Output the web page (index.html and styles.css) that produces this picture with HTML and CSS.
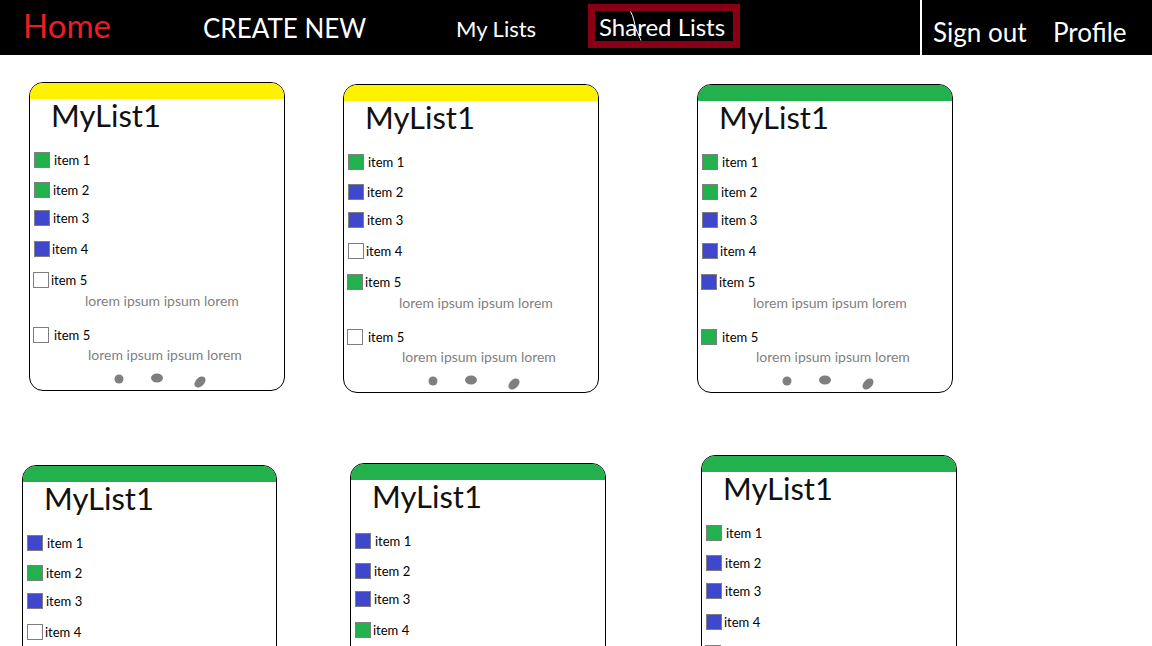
FILE: index.html
```html
<!DOCTYPE html>
<html>
<head>
<meta charset="utf-8">
<title>Lists</title>
<link rel="stylesheet" href="styles.css">
</head>
<body>
<div class="page">
  <header class="topbar">
    <a class="nav home">Home</a>
    <a class="nav create">CREATE NEW</a>
    <a class="nav mylists">My Lists</a>
    <a class="nav shared">Shared Lists<svg class="scratch" width="12" height="30" viewBox="0 0 12 30"><path d="M0.5 0.5 C4 6 4 12 6 18 C8 23 10 27 11 29.5" fill="none" stroke="#fff" stroke-width="1"/></svg></a>
    <span class="divider"></span>
    <a class="nav signout">Sign out</a>
    <a class="nav profile">Profile</a>
  </header>

  <main class="board">
    <div class="row row1">
      <section class="card c1">
        <div class="stripe yellow"></div>
        <h2 class="title">MyList1</h2>
        <div class="it i1"><span class="box green"></span><span>item 1</span></div>
        <div class="it i2"><span class="box green"></span><span>item 2</span></div>
        <div class="it i3"><span class="box blue"></span><span>item 3</span></div>
        <div class="it i4"><span class="box blue"></span><span>item 4</span></div>
        <div class="it i5"><span class="box"></span><span>item 5</span></div>
        <div class="lorem l1">lorem ipsum ipsum lorem</div>
        <div class="it i6"><span class="box"></span><span>item 5</span></div>
        <div class="lorem l2">lorem ipsum ipsum lorem</div>
        <svg class="dots" width="254" height="18" viewBox="0 0 254 18"><circle cx="89" cy="9" r="4.5"/><ellipse cx="127" cy="8" rx="6" ry="4.5"/><ellipse cx="170" cy="12" rx="6.5" ry="4.3" transform="rotate(-45 170 12)"/></svg>
      </section>
      <section class="card c2">
        <div class="stripe yellow"></div>
        <h2 class="title">MyList1</h2>
        <div class="it i1"><span class="box green"></span><span>item 1</span></div>
        <div class="it i2"><span class="box blue"></span><span>item 2</span></div>
        <div class="it i3"><span class="box blue"></span><span>item 3</span></div>
        <div class="it i4"><span class="box"></span><span>item 4</span></div>
        <div class="it i5"><span class="box green"></span><span>item 5</span></div>
        <div class="lorem l1">lorem ipsum ipsum lorem</div>
        <div class="it i6"><span class="box"></span><span>item 5</span></div>
        <div class="lorem l2">lorem ipsum ipsum lorem</div>
        <svg class="dots" width="254" height="18" viewBox="0 0 254 18"><circle cx="89" cy="9" r="4.5"/><ellipse cx="127" cy="8" rx="6" ry="4.5"/><ellipse cx="170" cy="12" rx="6.5" ry="4.3" transform="rotate(-45 170 12)"/></svg>
      </section>
      <section class="card c3">
        <div class="stripe green"></div>
        <h2 class="title">MyList1</h2>
        <div class="it i1"><span class="box green"></span><span>item 1</span></div>
        <div class="it i2"><span class="box green"></span><span>item 2</span></div>
        <div class="it i3"><span class="box blue"></span><span>item 3</span></div>
        <div class="it i4"><span class="box blue"></span><span>item 4</span></div>
        <div class="it i5"><span class="box blue"></span><span>item 5</span></div>
        <div class="lorem l1">lorem ipsum ipsum lorem</div>
        <div class="it i6"><span class="box green"></span><span>item 5</span></div>
        <div class="lorem l2">lorem ipsum ipsum lorem</div>
        <svg class="dots" width="254" height="18" viewBox="0 0 254 18"><circle cx="89" cy="9" r="4.5"/><ellipse cx="127" cy="8" rx="6" ry="4.5"/><ellipse cx="170" cy="12" rx="6.5" ry="4.3" transform="rotate(-45 170 12)"/></svg>
      </section>
    </div>

    <div class="row row2">
      <section class="card c4">
        <div class="stripe green"></div>
        <h2 class="title">MyList1</h2>
        <div class="it i1"><span class="box blue"></span><span>item 1</span></div>
        <div class="it i2"><span class="box green"></span><span>item 2</span></div>
        <div class="it i3"><span class="box blue"></span><span>item 3</span></div>
        <div class="it i4"><span class="box"></span><span>item 4</span></div>
        <div class="it i5"><span class="box"></span><span>item 5</span></div>
        <div class="lorem l1">lorem ipsum ipsum lorem</div>
      </section>
      <section class="card c5">
        <div class="stripe green"></div>
        <h2 class="title">MyList1</h2>
        <div class="it i1"><span class="box blue"></span><span>item 1</span></div>
        <div class="it i2"><span class="box blue"></span><span>item 2</span></div>
        <div class="it i3"><span class="box blue"></span><span>item 3</span></div>
        <div class="it i4"><span class="box green"></span><span>item 4</span></div>
        <div class="it i5"><span class="box"></span><span>item 5</span></div>
        <div class="lorem l1">lorem ipsum ipsum lorem</div>
      </section>
      <section class="card c6">
        <div class="stripe green"></div>
        <h2 class="title">MyList1</h2>
        <div class="it i1"><span class="box green"></span><span>item 1</span></div>
        <div class="it i2"><span class="box blue"></span><span>item 2</span></div>
        <div class="it i3"><span class="box blue"></span><span>item 3</span></div>
        <div class="it i4"><span class="box blue"></span><span>item 4</span></div>
        <div class="it i5"><span class="box"></span><span>item 5</span></div>
        <div class="lorem l1">lorem ipsum ipsum lorem</div>
      </section>
    </div>
  </main>
</div>
</body>
</html>
```

FILE: styles.css
```css
html, body {
  margin: 0;
  padding: 0;
  background: #fff;
}

.page {
  width: 1152px;
  height: 646px;
  overflow: hidden;
  font-family: Lato, "Open Sans", sans-serif;
}

/* ---------- top bar ---------- */
.topbar {
  display: flex;
  align-items: flex-start;
  height: 55px;
  background: #000;
  color: #fff;
}

.nav {
  display: block;
  flex: none;
  white-space: nowrap;
  color: #fff;
}

.home {
  margin-left: 23px;
  width: 180px;
  padding-top: 5px;
  font-size: 33px;
  line-height: 40px;
  color: #ed1c24;
}

.create {
  width: 253px;
  padding-top: 12px;
  font-size: 26px;
  line-height: 32px;
}

.mylists {
  width: 132px;
  padding-top: 15px;
  font-size: 22px;
  line-height: 28px;
}

.shared {
  position: relative;
  box-sizing: border-box;
  width: 152px;
  height: 44px;
  margin-top: 4px;
  padding: 2px 4px 0;
  border: 7px solid #880015;
  font-size: 24px;
  line-height: 28px;
}

.scratch {
  position: absolute;
  left: 35px;
  top: 0;
}

.divider {
  flex: none;
  width: 2px;
  height: 55px;
  margin-left: 180px;
  background: #fff;
}

.signout {
  width: 120px;
  margin-left: 11px;
  padding-top: 16px;
  font-size: 26px;
  line-height: 32px;
}

.profile {
  padding-top: 16px;
  font-size: 26px;
  line-height: 32px;
}

/* ---------- board ---------- */
.board {
  display: flex;
  flex-direction: column;
}

.row {
  display: flex;
  align-items: flex-start;
}

.card {
  flex: none;
  box-sizing: border-box;
  width: 256px;
  height: 309px;
  border: 1px solid #000;
  border-radius: 14px;
  overflow: hidden;
  background: #fff;
  display: flex;
  flex-direction: column;
  color: #000;
}

.c1 { margin: 27px 0 0 29px; }
.c2 { margin: 29px 0 0 58px; }
.c3 { margin: 29px 0 0 98px; }
.c4 { margin: 72px 0 0 22px; width: 255px; }
.c5 { margin: 70px 0 0 73px; }
.c6 { margin: 62px 0 0 95px; }

.stripe {
  flex: none;
  height: 16px;
}

.yellow { background: #fff200; }
.green { background: #22b14c; }
.blue { background: #3f48cc; }

.title {
  margin: 0 0 15px 0;
  padding: 2px 0 0 21px;
  font-size: 31px;
  line-height: 29px;
  font-weight: 400;
  color: #111;
}

.it {
  display: flex;
  align-items: center;
  padding-left: 4px;
  font-size: 13px;
  height: 30px;
}

.box {
  flex: none;
  box-sizing: border-box;
  width: 16px;
  height: 16px;
  border: 1px solid #7f7f7f;
  margin-right: 3px;
}

.box.green { background: #22b14c; }
.box.blue { background: #3f48cc; }

.i1 .box { margin-right: 4px; }
.i2 { height: 29px; }
.i3 { height: 28px; }
.i4 { height: 33px; }
.i4 .box { margin-right: 2px; }
.i5 { padding-left: 3px; }
.i5 .box { margin-right: 2px; }
.i6 { padding-left: 3px; margin-top: 13px; }
.i6 .box { margin-right: 5px; }

.lorem {
  font-size: 14px;
  color: #7f7f7f;
  white-space: nowrap;
}

.l1 {
  padding-left: 55px;
  height: 12px;
  line-height: 12px;
}

.l2 {
  padding-left: 58px;
  height: 10px;
  line-height: 10px;
}

.dots {
  flex: none;
  display: block;
  margin-top: 10px;
  fill: #7f7f7f;
}
```
